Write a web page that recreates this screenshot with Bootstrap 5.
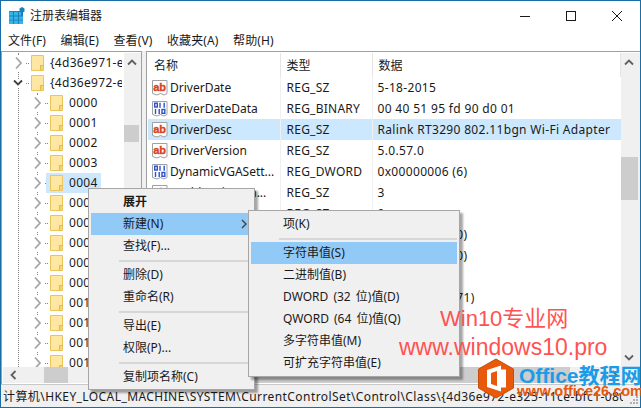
<!DOCTYPE html>
<html lang="zh"><head><meta charset="utf-8"><title>注册表编辑器</title>
<link href="https://cdn.jsdelivr.net/npm/bootstrap@5.3.0/dist/css/bootstrap.min.css" rel="stylesheet">
<style>
html,body{width:641px;height:408px;overflow:hidden;margin:0}
body{position:relative;font:12px/16px "Noto Sans","Noto Sans CJK SC",sans-serif;color:#1a1a1a;background:#fff}
.win{width:641px;height:408px;border:1px solid #1a6ea5;background:#f0f0f0}
.tbar{height:29px;background:#fff;padding-left:8px}
.tbar .ttl{margin-left:5px;font-size:12px}
.wbtns{margin-left:auto;width:120px;height:29px}
.wbtn{flex:none}
.wb-a{width:46px}
.wb-c{width:28px}
.mbar{height:21px;background:#fff;padding-left:7px;gap:14.6px;line-height:22px;letter-spacing:.1px}
.mainp{height:333px}
.tree{width:141px;border:1px solid #a0a0a0;border-width:1px 1px 0 1px;padding:1px 0 0 1px;background:#fff}
.tree-view{height:314px;overflow:hidden;position:relative}
.trow{height:20px;white-space:nowrap;line-height:20px;position:relative;letter-spacing:.3px}
.trow svg{flex:none}
.lv1{padding-left:12px}
.lv2{padding-left:31px}
.lv1::before,.lv2::before{content:"";position:absolute;top:10px;width:3px;border-top:1px dotted #808080}
.lv1::before{left:23px}
.lv2::before{left:42px}
.tname{margin-left:6px}
.fold{margin-left:9px}
.tarr{background:#fff}
.ex{margin-left:-2px;margin-right:-1px;background:#fff}
.hl{position:absolute;left:43px;top:0;width:55px;height:20px;background:#cce8ff}
.trow>*{position:relative}
.trow>.hl{position:absolute}
.vline{position:absolute;left:15px;top:0;bottom:0;border-left:1px dotted #808080}
.vline2{left:34px;top:40px}
.tcol{width:119px;margin-right:2px;overflow:hidden;position:relative}
.sbv{width:16px;background:#f0f0f0;position:relative}
.sbh{height:16px;background:#f0f0f0;position:relative}
.sb-ar{position:absolute}
.thumb{position:absolute;background:#cdcdcd}
.gapz{width:4px}
.listp{width:493px;border:1px solid #a0a0a0;border-width:1px 0 0 1px;padding:1px 0 0 1px;background:#fff}
.list-view{height:314px;overflow:hidden}
.lcol{width:473px;overflow:hidden}
.cw1{width:132px}
.cw2{width:92px}
table.regt{table-layout:fixed;width:473px;margin:0;border-collapse:collapse}
table.regt th,table.regt td{padding:0;border:0;height:21px;line-height:21px;white-space:nowrap;overflow:hidden;font-weight:400;color:#1a1a1a;background:transparent;box-shadow:none}
table.regt th{height:24px;line-height:22px;border-right:1px solid #e5e5e5;padding-left:6px}
table.regt td.ty{padding-left:6px;letter-spacing:.25px}
table.regt td.da{padding-left:5px;letter-spacing:.33px}
.nmw{display:flex;align-items:center;gap:2px;padding-left:4px}
.rico{flex:none}
.sel td{background:#cce8ff!important}
.sepc{border-right:1px solid #f0f0f0!important}
.stat{height:22px;border-top:1px solid #c8c8c8;background:#f0f0f0;padding-left:2px;line-height:23px;white-space:nowrap;position:relative;letter-spacing:.42px}
.stxt{width:620px;overflow:hidden}
.grip{position:absolute;right:1px;bottom:1px}
.ctx{display:block;position:absolute;z-index:auto;min-width:0;background:#f0f0f0;border:1px solid #a6a6a6;border-radius:0;padding:2px;box-shadow:3px 3px 2px rgba(0,0,0,.35);font-size:12px;margin:0;color:#1a1a1a}
.ctx .dropdown-item{padding:0 0 0 32px;height:22px;line-height:22px;color:#1a1a1a;font-size:12px;position:relative;background:transparent;word-spacing:2px}
.ctx .dropdown-item.act{background:#91c9f7}
.ctx .dropdown-divider{margin:3px 0 2px 28px;opacity:1;height:0;border-top:2px solid #d7d7d7}
.m1{left:88px;top:188px;width:167px;height:202px}
.m2{left:248px;top:210px;width:212px;height:167px}
.arr{position:absolute;right:5px;top:6px}
.wm{position:absolute;white-space:nowrap}
.wm1{left:440px;top:303px;color:#ff5252;font-size:22px;line-height:32px;font-family:"Liberation Sans","Noto Sans CJK SC",sans-serif}
.wm2{left:399px;top:331px;color:#ff5252;font-size:23px;line-height:32px;font-family:"Liberation Sans",sans-serif}
.wm3{left:519px;top:363px;color:#1b9ce8;font-size:21px;line-height:26px;font-weight:700;font-family:"Liberation Sans","Noto Sans CJK SC",sans-serif}
.wm4{left:517px;top:382px;color:#e8590c;font-size:14.5px;line-height:18px;font-weight:700;font-family:"Liberation Sans",sans-serif}
.logo{position:absolute;left:477px;top:358px}
.th1{left:0;right:2px;top:72px;height:17px}
.th2{left:41px;width:24px;top:0;bottom:0}
.th3{left:0;right:2px;top:104px;height:43px}
.th4{left:60px;width:362px;top:0;bottom:0}
.au{left:3px;top:6px}
.ad{left:3px;bottom:6px}
.al{left:7px;top:3px}
.ar{left:463px;top:3px}
</style></head><body>
<svg width="0" height="0" class="position-absolute">
<defs>
<symbol id="f" viewBox="0 0 13 16"><path d="M.5.5h12v15H.5z" fill="#fde7a2" stroke="#eac55c"/><path d="M9.500 15.500v-5h3" fill="#f5d272" stroke="#e3b94a"/><path d="M10 11h2v4h-2z" fill="#f5d272"/></symbol>
<symbol id="ar" viewBox="0 0 7 16"><path d="M1 2.500l5 5.500-5 5.500" fill="none" stroke="#a6a6a6" stroke-width="1.800"/></symbol>
<symbol id="ab" viewBox="0 0 16 16"><path d="M.5.500h14.500v13l-3 1.500-3.500-1.500-3.500 1.500-4.500-1.500z" fill="#fff" stroke="#a0a0a0"/><text x="1.200" y="10.500" font-size="11" font-weight="700" fill="#d9431e" stroke="#d9431e" stroke-width=".35" font-family="Liberation Sans">ab</text></symbol>
<symbol id="bin" viewBox="0 0 16 16"><path d="M.5.500h14.500v13l-3 1.500-3.500-1.500-3.500 1.500-4.500-1.500z" fill="#fff" stroke="#a0a0a0"/><g fill="none" stroke="#2a4fd0" stroke-width="1.400"><rect x="2.700" y="2.200" width="2.600" height="3.800"/><path d="M8 1.700v5M12.200 1.700v5"/><path d="M3.500 8v5M7.200 8v5"/><rect x="10" y="8.500" width="2.800" height="3.800"/></g></symbol>
</defs></svg>

<div class="win d-flex flex-column">
 <div class="tbar d-flex align-items-center">
  <svg width="16" height="17" viewBox="0 0 16 17"><rect x="0" y="4" width="14" height="13" fill="#1b80b8"/><g fill="#35b4ea"><rect x="0" y="5" width="4" height="3.500"/><rect x="5" y="5" width="4" height="3.500"/><rect x="10" y="5" width="2" height="3.500"/><rect x="0" y="9.500" width="4" height="3.200"/><rect x="5" y="9.500" width="4" height="3.200"/><rect x="10" y="9.500" width="4" height="3.200"/><rect x="0" y="13.500" width="4" height="3.500"/><rect x="5" y="13.500" width="4" height="3.500"/><rect x="10" y="13.500" width="4" height="3.500"/></g><path d="M13 0l2.500 1.500v3L13 6l-2.500-1.500v-3z" fill="#1b7fb8"/></svg>
  <span class="ttl">注册表编辑器</span>
  <div class="wbtns d-flex ms-auto align-items-center">
   <svg class="wbtn wb-a" width="46" height="12" viewBox="0 0 46 12"><path d="M0 6.500h10" stroke="#1a1a1a"/></svg>
   <svg class="wbtn wb-a" width="46" height="12" viewBox="0 0 46 12"><rect x="0.500" y="1.500" width="9" height="9" fill="none" stroke="#1a1a1a"/></svg>
   <svg class="wbtn wb-c" width="28" height="12" viewBox="0 0 28 12"><path d="M0 1l10 10M10 1l-10 10" stroke="#1a1a1a"/></svg>
  </div>
 </div>
 <div class="mbar d-flex"><span>文件(F)</span><span>编辑(E)</span><span>查看(V)</span><span>收藏夹(A)</span><span>帮助(H)</span></div>
 <div class="mainp d-flex">
  <div class="tree d-flex flex-column">
   <div class="d-flex tree-view">
    <div class="tcol">
     <div class="vline"></div>
     <div class="vline vline2"></div>
     <div class="trow lv1 d-flex align-items-center"><svg class="tarr" width="7" height="16"><use href="#ar"/></svg><svg class="fold" width="13" height="16"><use href="#f"/></svg><span class="tname">{4d36e971-e325-11ce</span></div>
     <div class="trow lv1 d-flex align-items-center"><svg class="ex" width="10" height="8" viewBox="0 0 10 8"><path d="M1 1.500l4 4 4-4" fill="none" stroke="#404040" stroke-width="1.800"/></svg><svg class="fold" width="13" height="16"><use href="#f"/></svg><span class="tname">{4d36e972-e325-11ce</span></div>
     <div class="trow lv2 d-flex align-items-center"><svg class="tarr" width="7" height="16"><use href="#ar"/></svg><svg class="fold" width="13" height="16"><use href="#f"/></svg><span class="tname">0000</span></div>
     <div class="trow lv2 d-flex align-items-center"><svg class="tarr" width="7" height="16"><use href="#ar"/></svg><svg class="fold" width="13" height="16"><use href="#f"/></svg><span class="tname">0001</span></div>
     <div class="trow lv2 d-flex align-items-center"><svg class="tarr" width="7" height="16"><use href="#ar"/></svg><svg class="fold" width="13" height="16"><use href="#f"/></svg><span class="tname">0002</span></div>
     <div class="trow lv2 d-flex align-items-center"><svg class="tarr" width="7" height="16"><use href="#ar"/></svg><svg class="fold" width="13" height="16"><use href="#f"/></svg><span class="tname">0003</span></div>
     <div class="trow lv2 d-flex align-items-center"><div class="hl"></div><svg class="tarr" width="7" height="16"><use href="#ar"/></svg><svg class="fold" width="13" height="16"><use href="#f"/></svg><span class="tname">0004</span></div>
     <div class="trow lv2 d-flex align-items-center"><svg class="tarr" width="7" height="16"><use href="#ar"/></svg><svg class="fold" width="13" height="16"><use href="#f"/></svg><span class="tname">0005</span></div>
     <div class="trow lv2 d-flex align-items-center"><svg class="tarr" width="7" height="16"><use href="#ar"/></svg><svg class="fold" width="13" height="16"><use href="#f"/></svg><span class="tname">0006</span></div>
     <div class="trow lv2 d-flex align-items-center"><svg class="tarr" width="7" height="16"><use href="#ar"/></svg><svg class="fold" width="13" height="16"><use href="#f"/></svg><span class="tname">0007</span></div>
     <div class="trow lv2 d-flex align-items-center"><svg class="tarr" width="7" height="16"><use href="#ar"/></svg><svg class="fold" width="13" height="16"><use href="#f"/></svg><span class="tname">0008</span></div>
     <div class="trow lv2 d-flex align-items-center"><svg class="tarr" width="7" height="16"><use href="#ar"/></svg><svg class="fold" width="13" height="16"><use href="#f"/></svg><span class="tname">0009</span></div>
     <div class="trow lv2 d-flex align-items-center"><svg class="tarr" width="7" height="16"><use href="#ar"/></svg><svg class="fold" width="13" height="16"><use href="#f"/></svg><span class="tname">0010</span></div>
     <div class="trow lv2 d-flex align-items-center"><svg class="tarr" width="7" height="16"><use href="#ar"/></svg><svg class="fold" width="13" height="16"><use href="#f"/></svg><span class="tname">0011</span></div>
     <div class="trow lv2 d-flex align-items-center"><svg class="tarr" width="7" height="16"><use href="#ar"/></svg><svg class="fold" width="13" height="16"><use href="#f"/></svg><span class="tname">0012</span></div>
     <div class="trow lv2 d-flex align-items-center"><svg class="tarr" width="7" height="16"><use href="#ar"/></svg><svg class="fold" width="13" height="16"><use href="#f"/></svg><span class="tname">0013</span></div>
    </div>
    <div class="sbv flex-fill">
     <svg class="sb-ar au" width="10" height="7"><path d="M1 5.500l4-4 4 4" fill="none" stroke="#606060" stroke-width="1.800"/></svg>
     <div class="thumb th1"></div>
    </div>
   </div>
   <div class="sbh">
    <svg class="sb-ar al" width="7" height="10"><path d="M5.500 1l-4 4 4 4" fill="none" stroke="#606060" stroke-width="1.800"/></svg>
    <div class="thumb th2"></div>
   </div>
  </div>
  <div class="gapz"></div>
  <div class="listp d-flex flex-column flex-fill">
   <div class="d-flex list-view">
    <div class="lcol">
     <table class="table regt">
      <colgroup><col class="cw1"><col class="cw2"><col></colgroup>
      <thead><tr><th>名称</th><th>类型</th><th>数据</th></tr></thead>
      <tbody>
       <tr><td class="nm sepc"><div class="nmw"><svg class="rico" width="16" height="16"><use href="#ab"/></svg>DriverDate</div></td><td class="ty sepc">REG_SZ</td><td class="da">5-18-2015</td></tr>
       <tr><td class="nm sepc"><div class="nmw"><svg class="rico" width="16" height="16"><use href="#bin"/></svg>DriverDateData</div></td><td class="ty sepc">REG_BINARY</td><td class="da">00 40 51 95 fd 90 d0 01</td></tr>
       <tr class="sel"><td class="nm sepc"><div class="nmw"><svg class="rico" width="16" height="16"><use href="#ab"/></svg>DriverDesc</div></td><td class="ty sepc">REG_SZ</td><td class="da">Ralink RT3290 802.11bgn Wi-Fi Adapter</td></tr>
       <tr><td class="nm sepc"><div class="nmw"><svg class="rico" width="16" height="16"><use href="#ab"/></svg>DriverVersion</div></td><td class="ty sepc">REG_SZ</td><td class="da">5.0.57.0</td></tr>
       <tr><td class="nm sepc"><div class="nmw"><svg class="rico" width="16" height="16"><use href="#bin"/></svg>DynamicVGASett...</div></td><td class="ty sepc">REG_DWORD</td><td class="da">0x00000006 (6)</td></tr>
       <tr><td class="nm sepc"><div class="nmw"><svg class="rico" width="16" height="16"><use href="#ab"/></svg>EnableDriveren...</div></td><td class="ty sepc">REG_SZ</td><td class="da">3</td></tr>
       <tr><td class="nm sepc"></td><td class="ty sepc">REG_SZ</td><td class="da">0</td></tr>
       <tr><td class="nm sepc"></td><td class="ty sepc"></td><td class="da">0x00000000 (0)</td></tr>
       <tr><td class="nm sepc"></td><td class="ty sepc"></td><td class="da">0x00000000 (0)</td></tr>
       <tr><td class="nm sepc"></td><td class="ty sepc"></td><td class="da">1</td></tr>
       <tr><td class="nm sepc"></td><td class="ty sepc"></td><td class="da">0x00000047 (71)</td></tr>
       <tr><td class="nm sepc"></td><td class="ty sepc"></td><td class="da"></td></tr>
       <tr><td class="nm sepc"></td><td class="ty sepc"></td><td class="da"></td></tr>
      </tbody>
     </table>
    </div>
    <div class="sbv flex-fill">
     <svg class="sb-ar au" width="10" height="7"><path d="M1 5.500l4-4 4 4" fill="none" stroke="#606060" stroke-width="1.800"/></svg>
     <div class="thumb th3"></div>
     <svg class="sb-ar ad" width="10" height="7"><path d="M1 1.500l4 4 4-4" fill="none" stroke="#606060" stroke-width="1.800"/></svg>
    </div>
   </div>
   <div class="sbh">
    <div class="thumb th4"></div>
    <svg class="sb-ar ar" width="7" height="10"><path d="M1.500 1l4 4-4 4" fill="none" stroke="#606060" stroke-width="1.800"/></svg>
   </div>
  </div>
 </div>
 <div class="stat"><div class="stxt">计算机\HKEY_LOCAL_MACHINE\SYSTEM\CurrentControlSet\Control\Class\{4d36e972-e325-11ce-bfc1-08002be10318}\0004</div>
  <svg class="grip" width="10" height="10" viewBox="0 0 10 10"><g fill="#b0b0b0"><rect x="7" y="1" width="2" height="2"/><rect x="4" y="4" width="2" height="2"/><rect x="7" y="4" width="2" height="2"/><rect x="1" y="7" width="2" height="2"/><rect x="4" y="7" width="2" height="2"/><rect x="7" y="7" width="2" height="2"/></g></svg>
 </div>
</div>

<div class="dropdown-menu ctx m1">
 <div class="dropdown-item fw-bold">展开</div>
 <div class="dropdown-item act">新建(N)<svg class="arr" width="6" height="10"><path d="M1 1l4 4-4 4" fill="none" stroke="#404040" stroke-width="1.400"/></svg></div>
 <div class="dropdown-item">查找(F)...</div>
 <div class="dropdown-divider"></div>
 <div class="dropdown-item">删除(D)</div>
 <div class="dropdown-item">重命名(R)</div>
 <div class="dropdown-divider"></div>
 <div class="dropdown-item">导出(E)</div>
 <div class="dropdown-item">权限(P)...</div>
 <div class="dropdown-divider"></div>
 <div class="dropdown-item">复制项名称(C)</div>
</div>
<div class="dropdown-menu ctx m2">
 <div class="dropdown-item">项(K)</div>
 <div class="dropdown-divider"></div>
 <div class="dropdown-item act">字符串值(S)</div>
 <div class="dropdown-item">二进制值(B)</div>
 <div class="dropdown-item">DWORD (32 位)值(D)</div>
 <div class="dropdown-item">QWORD (64 位)值(Q)</div>
 <div class="dropdown-item">多字符串值(M)</div>
 <div class="dropdown-item">可扩充字符串值(E)</div>
</div>

<div class="wm wm1">Win10专业网</div>
<div class="wm wm2">www.windows10.pro</div>
<svg class="logo" width="38" height="41" viewBox="0 0 38 41"><path d="M19 1l17.500 10v19L19 40 1.500 30V11z" fill="#e8590c" stroke="#c94c08"/><path d="M10 12l14-4.500v26L10 29zM24 11.500h5v18h-5" fill="#fff"/><path d="M14 15l6-2v15l-6-2z" fill="#e8590c"/></svg>
<div class="wm wm3">Office教程网</div>
<div class="wm wm4">www.office26.com</div>
</body></html>
